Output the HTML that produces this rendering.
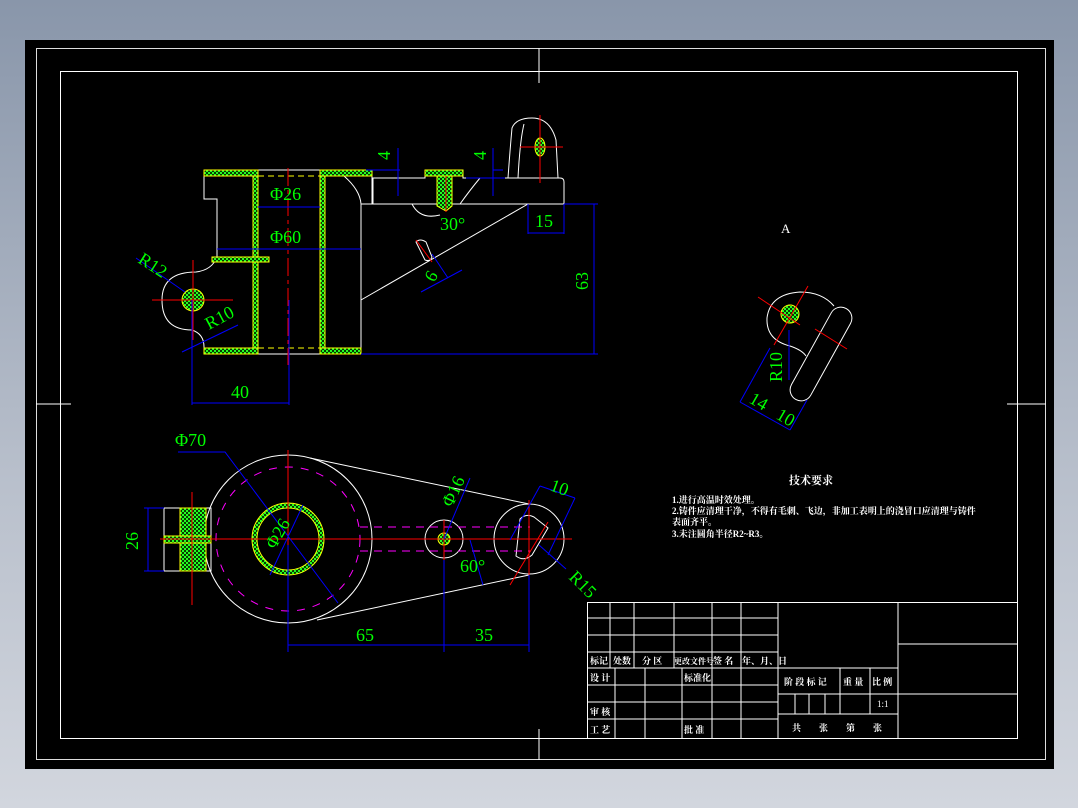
<!DOCTYPE html>
<html><head><meta charset="utf-8"><style>
html,body{margin:0;padding:0;width:1078px;height:808px;overflow:hidden;background:linear-gradient(#8996aa,#b9c0cc 60%,#d2d6de);}
svg{position:absolute;left:0;top:0}
text{font-family:"Liberation Serif","Noto Serif CJK SC",serif;}
.g{fill:#00ff00;font-size:18px}
.c{fill:#fff;font-family:"Liberation Sans","Noto Sans CJK SC",sans-serif;font-weight:bold;font-size:9px}
</style></head><body>
<svg width="1078" height="808" viewBox="0 0 1078 808">
<defs>
<pattern id="h" width="4" height="4" patternUnits="userSpaceOnUse">
<rect width="4" height="4" fill="#0a3a00"/><rect width="2" height="2" fill="#22ff22"/><rect x="2" y="2" width="2" height="2" fill="#22ff22"/>
</pattern>
</defs>
<rect x="25" y="40" width="1029" height="729" fill="#000"/>
<g fill="none" stroke="#fff" stroke-width="1">
<rect x="36.5" y="48.5" width="1009" height="711" stroke="#ddd"/>
<rect x="60.5" y="71.5" width="957" height="667"/>
<path d="M539 48V83M539 729V760M36 404H71M1007 404H1046"/>
</g>
<!-- Top view -->
<g fill="none" stroke="#fff" stroke-width="1">
<path d="M204 170H373M204 170V199H217V257Q212 270 196 272Q162 272 162 300Q162 330 192 330Q204 334 204 347V354H361V204H564V182Q564 178 560 178H463V170H425V178H373V204M372 170V204"/>
<path d="M361 300L528 204"/>
<path d="M344 176Q360 190 361 204"/>
<path d="M412 204Q420 220 440 215M460 204Q470 190 480 178"/>
<path d="M508 178Q510 150 512 128Q516 118 532 118Q550 118 556 140L558 178M518 178Q520 140 524 124"/>
<path d="M416 242Q420 238 426 242L432 257Q430 262 425 260Z"/>
</g>
<g fill="url(#h)" stroke="#ff0" stroke-width="1">
<rect x="204" y="170" width="54" height="6"/><rect x="320" y="170" width="52" height="6"/>
<rect x="253" y="176" width="5" height="172"/><rect x="320" y="176" width="5" height="172"/>
<rect x="204" y="348" width="54" height="6"/><rect x="320" y="348" width="41" height="6"/>
<rect x="212" y="257" width="57" height="5"/>
<rect x="425" y="170" width="38" height="6"/><path d="M437 176H452V206L446 211L437 206Z"/>
<ellipse cx="540" cy="147" rx="5" ry="9"/>
<circle cx="193" cy="300" r="11"/>
</g>
<g stroke="#ff0" stroke-dasharray="6,4"><path d="M258 176H320M258 348H320"/></g>
<g stroke="#f00" stroke-width="1"><path d="M288 168V365" stroke-dasharray="18,4,4,4"/><path d="M152 300H233M193 260V340M520 147H563M540 115V183M446 176V212M416 240L432 262"/></g>
<g stroke="#00f" stroke-width="1" fill="none">
<path d="M258 207H320M217 249H361M289 300V405M192 300V405M192 403H289M361 354H598M564 204H598M594 204V354M528 204V234M564 204V234M528 233H564M366 170H400M398 148V196M503 170H493M493 148V196M466 178H505M136 258L185 292M182 352L238 325M421 292L462 270M432 254L448 278"/>
</g>
<g class="g">
<text x="270" y="200">Φ26</text><text x="270" y="243">Φ60</text><text x="231" y="398">40</text>
<text x="440" y="230">30°</text><text x="535" y="227">15</text>
<text transform="translate(588,290) rotate(-90)">63</text>
<text transform="translate(390,160) rotate(-90)">4</text><text transform="translate(486,160) rotate(-90)">4</text>
<text transform="translate(137,262) rotate(33)">R12</text>
<text transform="translate(209,330) rotate(-28)">R10</text>
<text transform="translate(434,283) rotate(-60)">6</text>
</g>
<!-- Bottom view -->
<g fill="none" stroke="#fff">
<circle cx="288" cy="539" r="84"/>
<path d="M310 458L529 504M317 620L529 575"/>
<circle cx="529" cy="539" r="35"/>
<circle cx="444" cy="539" r="19"/>
<rect x="164" y="508" width="47" height="63"/>
<path d="M520 519Q526 513 534 517L548 528L532 555Q524 562 516 556Z"/>
</g>
<circle cx="288" cy="539" r="72" fill="none" stroke="#f0f" stroke-dasharray="8,8"/>
<path d="M360 527H530M360 551H530" stroke="#f0f" stroke-dasharray="8,6"/>
<circle cx="288" cy="539" r="33.5" fill="none" stroke="url(#h)" stroke-width="5"/>
<circle cx="288" cy="539" r="36" fill="none" stroke="#ff0" stroke-width="1"/>
<circle cx="288" cy="539" r="31" fill="none" stroke="#ff0" stroke-width="1"/>
<circle cx="444" cy="539" r="6" fill="url(#h)" stroke="#ff0"/>
<g fill="url(#h)" stroke="#ff0"><rect x="180" y="508" width="26" height="28"/><rect x="180" y="543" width="26" height="28"/><rect x="164" y="536" width="47" height="7"/></g>
<g stroke="#f00"><path d="M160 539H572M288 450V625M444 520V560M529 500V578M192 492V605M510 585L548 522"/></g>
<g stroke="#00f" fill="none">
<path d="M178 452H225L338 603M270 575L303 505M144 508H164M144 571H164M148 508V571M288 545V652M444 560V652M529 575V652M288 645H529M540 486L575 498M540 486L510 540M575 498L548 555M566 569L539 545M470 540L483 585M444 539L470 478"/>
</g>
<g class="g">
<text x="175" y="446">Φ70</text><text x="356" y="641">65</text><text x="475" y="641">35</text>
<text x="460" y="572">60°</text>
<text transform="translate(138,550) rotate(-90)">26</text>
<text transform="translate(275,550) rotate(-60)">Φ26</text>
<text transform="translate(452,508) rotate(-65)">Φ16</text>
<text transform="translate(549,490) rotate(20)">10</text>
<text transform="translate(568,578) rotate(45)">R15</text>
</g>
<!-- View A -->
<text x="781" y="233" fill="#fff" font-size="13">A</text>
<g fill="none" stroke="#fff">
<path d="M834 306Q822 292 800 292Q770 294 767 318Q766 340 790 346Q802 350 806 356"/>
<rect x="-52" y="-11" width="104" height="22" rx="11" transform="translate(821,354) rotate(119)" fill="#000"/>
</g>
<circle cx="790" cy="314" r="9" fill="url(#h)" stroke="#ff0"/>
<g stroke="#f00"><path d="M758 297L800 325M808 286L774 345M815 329L847 349"/></g>
<g stroke="#00f" fill="none"><path d="M789 330V380M770 348L740 402M740 402L790 430M790 430L807 400"/></g>
<g class="g" font-size="15">
<text transform="translate(782,382) rotate(-90)">R10</text>
<text transform="translate(748,402) rotate(30)">14</text>
<text transform="translate(775,418) rotate(30)">10</text>
</g>
<!-- tech req -->
<text x="789" y="484" fill="#fff" font-size="11" font-weight="bold" font-family="Noto Sans CJK SC,sans-serif">技术要求</text>
<g class="c" font-size="7.5">
<text x="672" y="503">1.进行高温时效处理。</text>
<text x="672" y="514">2.铸件应清理干净，不得有毛刺、飞边，非加工表明上的浇冒口应清理与铸件</text>
<text x="672" y="525">表面齐平。</text>
<text x="672" y="537">3.未注圆角半径R2~R3。</text>
</g>
<!-- title block -->
<g stroke="#fff" fill="none">
<rect x="587.5" y="602.5" width="430" height="136"/>
<path d="M587 618H778M587 635H778M587 652H778M587 668H898M587 685H778M587 702H778M587 719H778M778 694H1018M778 714H898M898 644H1018M778 602V738M898 602V738"/>
<path d="M610 602V668M634 602V668M674 602V668M712 602V738M741 602V738M615 668V738M645 668V738M682 668V738M840 668V714M870 668V714M795 694V714M809 694V714M825 694V714"/>
</g>
<g class="c" font-size="9">
<text x="590" y="664">标记</text><text x="613" y="664">处数</text><text x="642" y="664">分 区</text><text x="674" y="664" font-size="8">更改文件号</text><text x="713" y="664">签 名</text><text x="742" y="664">年、月、日</text>
<text x="590" y="681">设 计</text><text x="684" y="681">标准化</text>
<text x="590" y="715">审 核</text><text x="590" y="733">工 艺</text><text x="684" y="733">批 准</text>
<text x="784" y="685">阶 段 标 记</text><text x="843" y="685">重 量</text><text x="872" y="685">比 例</text>
<text x="877" y="707" font-weight="normal">1:1</text>
<text x="792" y="731">共　　张　　第　　张</text>
</g>
</svg>
</body></html>
